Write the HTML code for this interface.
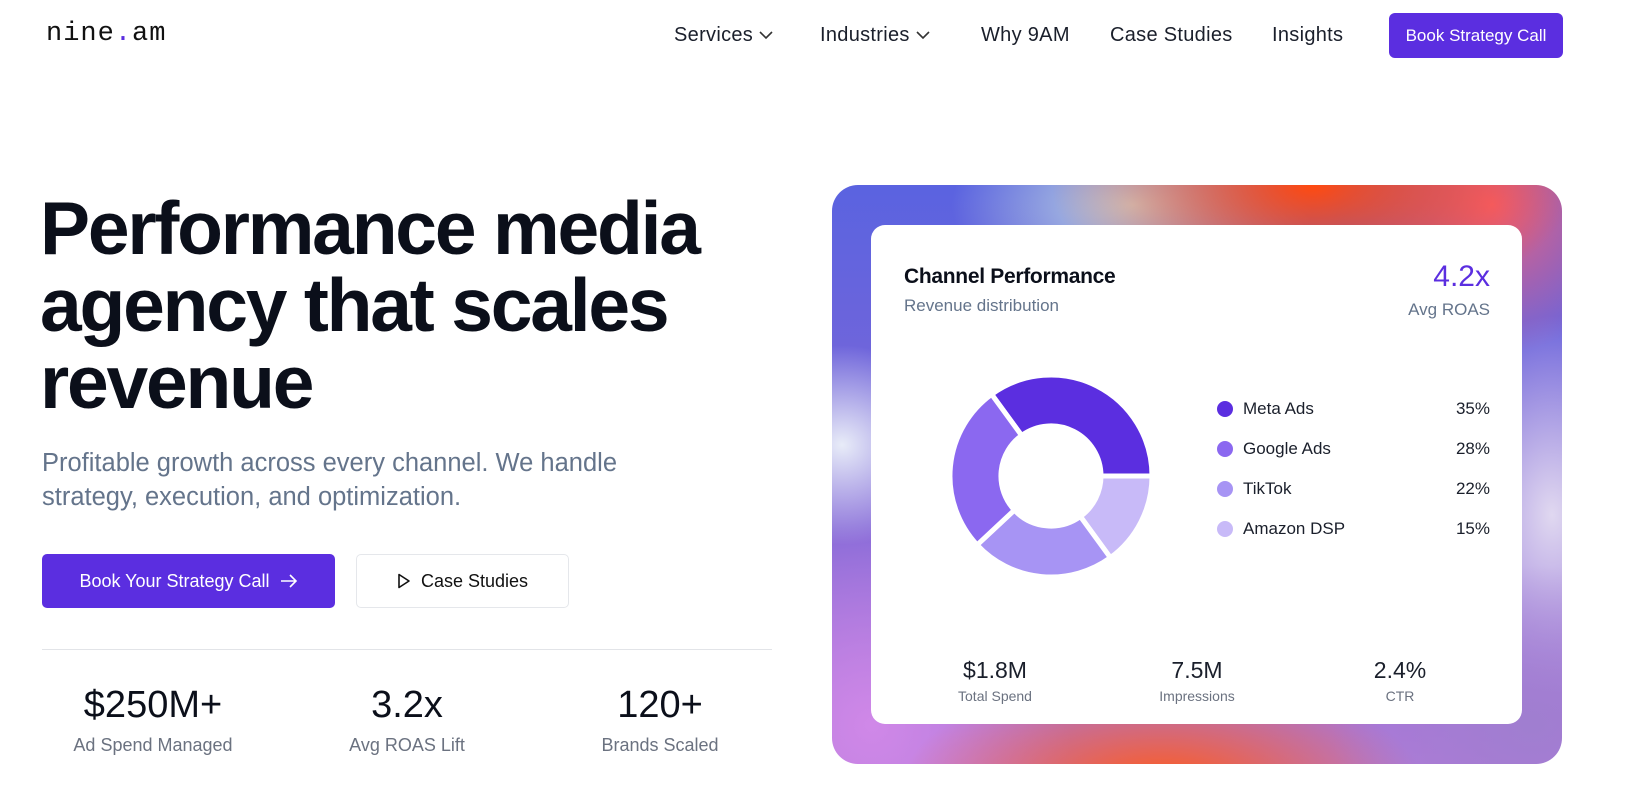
<!DOCTYPE html>
<html><head><meta charset="utf-8"><style>
*{margin:0;padding:0;box-sizing:border-box}
body{width:1630px;height:787px;overflow:hidden;background:#fff;font-family:"Liberation Sans",sans-serif;color:#0b0f1a;position:relative}
.abs{position:absolute}
.logo{left:46px;top:19px;font-family:"Liberation Mono",monospace;font-size:27px;letter-spacing:1px;color:#111}
.logo b{color:#5b2ee0;font-weight:normal}
.nav{top:24px;font-size:20px;color:#1a1f2b;letter-spacing:.3px}
.nav svg{vertical-align:middle;margin-left:6px}
.btn{left:1389px;top:13px;width:174px;height:45px;background:#5b2ee0;color:#fff;border-radius:6px;font-size:17px;display:flex;align-items:center;justify-content:center}
h1{left:40px;top:190px;font-size:75px;line-height:77px;font-weight:bold;letter-spacing:-2.2px;color:#0b0f1a}
.sub{left:42px;top:446px;font-size:25.5px;line-height:34px;color:#64748b}
.b1{left:42px;top:554px;width:293px;height:54px;background:#5b2ee0;color:#fff;border-radius:5px;font-size:18px;display:flex;align-items:center;justify-content:center;gap:10px}
.b2{left:356px;top:554px;width:213px;height:54px;border:1px solid #e5e7eb;border-radius:5px;font-size:18px;display:flex;align-items:center;justify-content:center;gap:10px;color:#111}
.hr{left:42px;top:649px;width:730px;height:1px;background:#e2e4e8}
.st{top:684px;width:260px;text-align:center}
.st .n{font-size:38px;color:#0b0f1a}
.st .l{font-size:18px;color:#6b7280;margin-top:8px}
.card{left:832px;top:185px;width:730px;height:579px;border-radius:26px;overflow:hidden;
background:
radial-gradient(ellipse 200px 160px at 700px 540px,#a07ed0 0%,rgba(160,126,208,0) 100%),
radial-gradient(ellipse 260px 110px at 330px 600px,#ff5a1a 0%,rgba(255,90,26,0) 100%),
radial-gradient(ellipse 260px 130px at 480px 0px,#ff4a10 0%,rgba(255,74,16,0) 100%),
radial-gradient(ellipse 150px 150px at 660px 20px,#f0607a 0%,rgba(240,96,122,0) 100%),
radial-gradient(ellipse 120px 200px at 720px 330px,#e0d8f0 0%,rgba(224,216,240,0) 100%),
radial-gradient(ellipse 180px 100px at 300px 20px,#c0d8e0 0%,rgba(192,216,224,0) 100%),
radial-gradient(ellipse 200px 200px at 40px 540px,#d088e8 0%,rgba(208,136,232,0) 100%),
radial-gradient(ellipse 110px 100px at 10px 260px,#e8ecf8 0%,rgba(232,236,248,0) 100%),
linear-gradient(180deg,#5a63e0 0%,#7a66d8 45%,#b07ad8 100%)}
.inner{left:871px;top:225px;width:651px;height:499px;background:#fff;border-radius:14px}
.ct{left:904px;top:265px;font-size:21px;font-weight:bold;letter-spacing:-.3px}
.cs{left:904px;top:296px;font-size:17px;color:#64748b}
.r1{right:140px;top:260px;font-size:30px;color:#5b2ee0}
.r2{right:140px;top:300px;font-size:17px;color:#64748b}
.lg{left:1217px;width:273px;font-size:17px;display:flex;align-items:center;color:#1a1f2b}
.lg i{width:16px;height:16px;border-radius:50%;margin-right:10px;display:inline-block}
.lg span:last-child{margin-left:auto}
.bs{top:657px;width:160px;text-align:center}
.bs .n{font-size:23px;color:#1a1f2b}
.bs .l{font-size:14px;color:#6b7280;margin-top:4px}
</style></head><body>
<div class="abs logo">nine<b>.</b>am</div>
<div class="abs nav" style="left:674px">Services<svg width="14" height="9" viewBox="0 0 14 9"><path d="M1 1l6 6 6-6" fill="none" stroke="#333" stroke-width="1.6"/></svg></div>
<div class="abs nav" style="left:820px">Industries<svg width="14" height="9" viewBox="0 0 14 9"><path d="M1 1l6 6 6-6" fill="none" stroke="#333" stroke-width="1.6"/></svg></div>
<div class="abs nav" style="left:981px">Why 9AM</div>
<div class="abs nav" style="left:1110px">Case Studies</div>
<div class="abs nav" style="left:1272px">Insights</div>
<div class="abs btn">Book Strategy Call</div>
<h1 class="abs">Performance media<br>agency that scales<br>revenue</h1>
<div class="abs sub">Profitable growth across every channel. We handle<br>strategy, execution, and optimization.</div>
<div class="abs b1">Book Your Strategy Call <svg width="18" height="14" viewBox="0 0 18 14"><path d="M1 7h15M10 1l6 6-6 6" fill="none" stroke="#fff" stroke-width="1.6"/></svg></div>
<div class="abs b2"><svg width="14" height="16" viewBox="0 0 14 16"><path d="M2 1.5l10 6.5-10 6.5z" fill="none" stroke="#111" stroke-width="1.6" stroke-linejoin="round"/></svg>Case Studies</div>
<div class="abs hr"></div>
<div class="abs st" style="left:23px"><div class="n">$250M+</div><div class="l">Ad Spend Managed</div></div>
<div class="abs st" style="left:277px"><div class="n">3.2x</div><div class="l">Avg ROAS Lift</div></div>
<div class="abs st" style="left:530px"><div class="n">120+</div><div class="l">Brands Scaled</div></div>
<div class="abs card"></div>
<div class="abs inner"></div>
<div class="abs ct">Channel Performance</div>
<div class="abs cs">Revenue distribution</div>
<div class="abs r1">4.2x</div>
<div class="abs r2">Avg ROAS</div>
<svg class="abs" style="left:941px;top:366px" width="220" height="220" viewBox="-110 -110 220 220">
<g stroke="#fff" stroke-width="5">
<path d="M-59.4 -81.7 A101 101 0 0 1 101 0 L50 0 A50 50 0 0 0 -29.4 -40.5Z" fill="#5b2ee0"/>
<path d="M101 0 A101 101 0 0 1 59.4 81.7 L29.4 40.5 A50 50 0 0 0 50 0Z" fill="#c8baf8"/>
<path d="M59.4 81.7 A101 101 0 0 1 -73.9 68.9 L-36.6 34.1 A50 50 0 0 0 29.4 40.5Z" fill="#a794f4"/>
<path d="M-73.9 68.9 A101 101 0 0 1 -59.4 -81.7 L-29.4 -40.5 A50 50 0 0 0 -36.6 34.1Z" fill="#8b68f0"/>
</g></svg>
<div class="abs lg" style="top:399px"><i style="background:#5b2ee0"></i><span>Meta Ads</span><span>35%</span></div>
<div class="abs lg" style="top:439px"><i style="background:#8b68f0"></i><span>Google Ads</span><span>28%</span></div>
<div class="abs lg" style="top:479px"><i style="background:#a794f4"></i><span>TikTok</span><span>22%</span></div>
<div class="abs lg" style="top:519px"><i style="background:#c8baf8"></i><span>Amazon DSP</span><span>15%</span></div>
<div class="abs bs" style="left:915px"><div class="n">$1.8M</div><div class="l">Total Spend</div></div>
<div class="abs bs" style="left:1117px"><div class="n">7.5M</div><div class="l">Impressions</div></div>
<div class="abs bs" style="left:1320px"><div class="n">2.4%</div><div class="l">CTR</div></div>
</body></html>
